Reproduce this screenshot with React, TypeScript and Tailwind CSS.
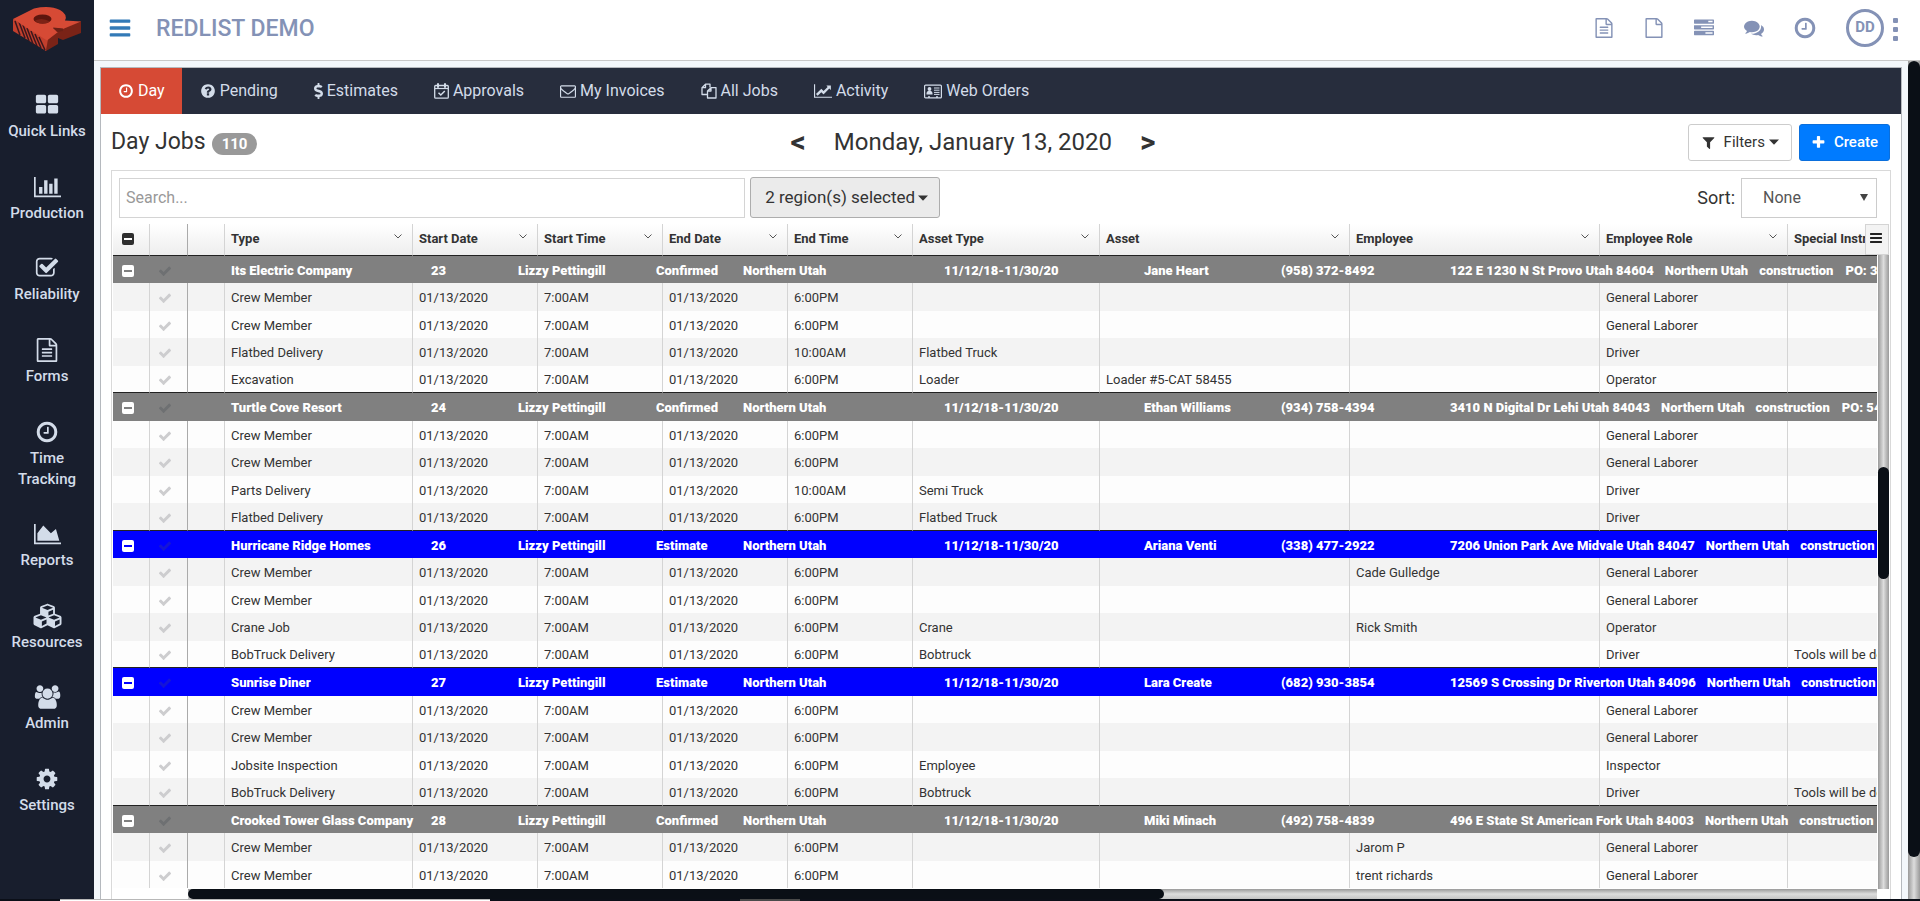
import React, { useState } from "react";
import { FaCubes, FaDollarSign } from "react-icons/fa";

const paths = {
  grid: "M832 1024v384q0 52-38 90t-90 38h-512q-52 0-90-38t-38-90v-384q0-52 38-90t90-38h512q52 0 90 38t38 90zm0-768v384q0 52-38 90t-90 38h-512q-52 0-90-38t-38-90v-384q0-52 38-90t90-38h512q52 0 90 38t38 90zm896 768v384q0 52-38 90t-90 38h-512q-52 0-90-38t-38-90v-384q0-52 38-90t90-38h512q52 0 90 38t38 90zm0-768v384q0 52-38 90t-90 38h-512q-52 0-90-38t-38-90v-384q0-52 38-90t90-38h512q52 0 90 38t38 90z",
  bars: "M640 896v512h-256v-512h256zm384-512v1024h-256v-1024h256zm1024 1152v128h-2048v-1536h128v1408h1920zm-640-896v768h-256v-768h256zm384-384v1152h-256v-1152h256z",
  area: "M2048 1536v128h-2048v-1536h128v1408h1920zm-384-1024l256 896h-1664v-576l448-576 576 576z",
  line: "M2048 1536v128h-2048v-1536h128v1408h1920zm-128-1248v435q0 21-19.5 29.5t-35.5-7.5l-121-121-633 633q-10 10-23 10t-23-10l-233-233-416 416-192-192 585-585q10-10 23-10t23 10l233 233 464-464-121-121q-16-16-7.5-35.5t29.5-19.5h435q14 0 23 9t9 23z",
  clock: "M1024 544v448q0 14-9 23t-23 9h-320q-14 0-23-9t-9-23v-64q0-14 9-23t23-9h224v-352q0-14 9-23t23-9h64q14 0 23 9t9 23zm416 352q0-148-73-273t-198-198-273-73-273 73-198 198-73 273 73 273 198 198 273 73 273-73 198-198 73-273zm224 0q0 209-103 385.5t-279.5 279.5-385.5 103-385.5-103-279.5-279.5-103-385.5 103-385.5 279.5-279.5 385.5-103 385.5 103 279.5 279.5 103 385.5z",
  fileText: "M1596 380q28 28 48 76t20 88v1152q0 40-28 68t-68 28h-1344q-40 0-68-28t-28-68v-1600q0-40 28-68t68-28h896q40 0 88 20t76 48zm-444-244v376h376q-10-29-22-41l-313-313q-12-12-41-22zm384 1528v-1024h-416q-40 0-68-28t-28-68v-416h-768v1536h1280zm-1024-864q0-14 9-23t23-9h704q14 0 23 9t9 23v64q0 14-9 23t-23 9h-704q-14 0-23-9t-9-23v-64zm736 224q14 0 23 9t9 23v64q0 14-9 23t-23 9h-704q-14 0-23-9t-9-23v-64q0-14 9-23t23-9h704zm0 256q14 0 23 9t9 23v64q0 14-9 23t-23 9h-704q-14 0-23-9t-9-23v-64q0-14 9-23t23-9h704z",
  file: "M1596 380q28 28 48 76t20 88v1152q0 40-28 68t-68 28h-1344q-40 0-68-28t-28-68v-1600q0-40 28-68t68-28h896q40 0 88 20t76 48zm-444-244v376h376q-10-29-22-41l-313-313q-12-12-41-22zm384 1528v-1024h-416q-40 0-68-28t-28-68v-416h-768v1536h1280z",
  checkSquare: "M1472 930v318q0 119-84.5 203.5t-203.5 84.5h-832q-119 0-203.5-84.5t-84.5-203.5v-832q0-119 84.5-203.5t203.5-84.5h832q63 0 117 25 15 7 18 23 3 17-9 29l-49 49q-10 10-23 10-3 0-9-2-23-6-45-6h-832q-66 0-113 47t-47 113v832q0 66 47 113t113 47h832q66 0 113-47t47-113v-254q0-13 9-22l64-64q10-10 23-10 6 0 12 3 20 8 20 29zm231-489l-814 814q-24 24-57 24t-57-24l-430-430q-24-24-24-57t24-57l110-110q24-24 57-24t57 24l263 263 647-647q24-24 57-24t57 24l110 110q24 24 24 57t-24 57z",
  cog: "M1152 896q0-106-75-181t-181-75-181 75-75 181 75 181 181 75 181-75 75-181zm512-109v222q0 12-8 23t-20 13l-185 28q-19 54-39 91 35 50 107 138 10 12 10 25t-9 23q-27 37-99 108t-94 71q-12 0-26-9l-138-108q-44 23-91 38-16 136-29 186-7 28-36 28h-222q-14 0-24.5-8.5t-11.5-21.5l-28-184q-49-16-90-37l-141 107q-10 9-25 9-14 0-25-11-126-114-165-168-7-10-7-23 0-12 8-23 15-21 51-66.5t54-70.5q-27-50-41-99l-183-27q-13-2-21-12.5t-8-23.5v-222q0-12 8-23t19-13l186-28q14-46 39-92-40-57-107-138-10-12-10-24 0-10 9-23 26-36 98.5-107.5t94.5-71.5q13 0 26 10l138 107q44-23 91-38 16-136 29-186 7-28 36-28h222q14 0 24.5 8.5t11.5 21.5l28 184q49 16 90 37l142-107q9-9 24-9 13 0 25 10 129 119 165 170 7 8 7 22 0 12-8 23-15 21-51 66.5t-54 70.5q26 50 41 98l183 28q13 2 21 12.5t8 23.5z",
  check: "M1671 566q0 40-28 68l-724 724-136 136q-28 28-68 28t-68-28l-136-136-362-362q-28-28-28-68t28-68l136-136q28-28 68-28t68 28l294 295 656-657q28-28 68-28t68 28l136 136q28 28 28 68z",
  plus: "M1600 736v192q0 40-28 68t-68 28h-416v416q0 40-28 68t-68 28h-192q-40 0-68-28t-28-68v-416h-416q-40 0-68-28t-28-68v-192q0-40 28-68t68-28h416v-416q0-40 28-68t68-28h192q40 0 68 28t28 68v416h416q40 0 68 28t28 68z",
  filter: "M1595 295q17 41-14 70l-493 493v742q0 42-39 59-13 5-25 5-27 0-45-19l-256-256q-19-19-19-45v-486l-493-493q-31-29-14-70 17-39 59-39h1280q42 0 59 39z",
  menu: "M1664 1344v128q0 26-19 45t-45 19h-1408q-26 0-45-19t-19-45v-128q0-26 19-45t45-19h1408q26 0 45 19t19 45zm0-512v128q0 26-19 45t-45 19h-1408q-26 0-45-19t-19-45v-128q0-26 19-45t45-19h1408q26 0 45 19t19 45zm0-512v128q0 26-19 45t-45 19h-1408q-26 0-45-19t-19-45v-128q0-26 19-45t45-19h1408q26 0 45 19t19 45z",
  tasks: "M1024 1408h640v-128h-640v128zm-384-512h1024v-128h-1024v128zm640-512h384v-128h-384v128zm512 832v256q0 26-19 45t-45 19h-1664q-26 0-45-19t-19-45v-256q0-26 19-45t45-19h1664q26 0 45 19t19 45zm0-512v256q0 26-19 45t-45 19h-1664q-26 0-45-19t-19-45v-256q0-26 19-45t45-19h1664q26 0 45 19t19 45zm0-512v256q0 26-19 45t-45 19h-1664q-26 0-45-19t-19-45v-256q0-26 19-45t45-19h1664q26 0 45 19t19 45z",
  comments: "M1408 768q0 139-94 257t-256.5 186.5-353.5 68.5q-86 0-176-16-124 88-278 128-36 9-86 16h-3q-11 0-20.5-8t-11.5-21q-1-3-1-6.5t.5-6.5 2-6l2.5-5 3.5-5.5 4-5 4.5-5 4-4.5q5-6 23-25t26-29.5 22.5-29 25-38.5 20.5-44q-124-72-195-177t-71-224q0-139 94-257t256.5-186.5 353.5-68.5 353.5 68.5 256.5 186.5 94 257zm384 256q0 120-71 224.5t-195 176.5q10 24 20.5 44t25 38.5 22.5 29 26 29.5 23 25q1 1 4 4.5t4.5 5 4 5 3.5 5.5l2.5 5 2 6 .5 6.5-1 6.5q-3 14-13 22t-22 7q-50-7-86-16-154-40-278-128-90 16-176 16-271 0-472-132 58 4 88 4 161 0 309-45t264-129q125-92 192-212t67-254q0-77-23-152 129 71 204 178t75 230z",
  question: "M1024 1376v-192q0-14-9-23t-23-9h-192q-14 0-23 9t-9 23v192q0 14 9 23t23 9h192q14 0 23-9t9-23zm256-672q0-88-55.5-163t-138.5-116-170-41q-243 0-371 213-15 24 8 42l132 100q7 6 19 6 16 0 25-12 53-68 86-92 34-24 86-24 48 0 85.5 26t37.5 59q0 38-20 61t-68 45q-63 28-115.5 86.5t-52.5 125.5v36q0 14 9 23t23 9h192q14 0 23-9t9-23q0-19 21.5-49.5t54.5-49.5q32-18 49-28.5t46-35 44.5-48 28-60.5 12.5-81zm384 192q0 209-103 385.5t-279.5 279.5-385.5 103-385.5-103-279.5-279.5-103-385.5 103-385.5 279.5-279.5 385.5-103 385.5 103 279.5 279.5 103 385.5z",
  envelope: "M1664 1504v-768q-32 36-69 66-268 206-426 338-51 43-83 67t-86.5 48.5-102.5 24.5h-2q-48 0-102.5-24.5t-86.5-48.5-83-67q-158-132-426-338-37-30-69-66v768q0 13 9.5 22.5t22.5 9.5h1472q13 0 22.5-9.5t9.5-22.5zm0-1051v-24.5l-.5-13-3-12.5-5.5-9-9-7.5-14-2.5h-1472q-13 0-22.5 9.5t-9.5 22.5q0 168 147 284 193 152 401 317 6 5 35 29.5t46 37.5 44.5 31.5 50.5 27.5 43 9h2q20 0 43-9t50.5-27.5 44.5-31.5 46-37.5 35-29.5q208-165 401-317 54-43 100.5-115.5t46.5-131.5zm128-37v1088q0 66-47 113t-113 47h-1472q-66 0-113-47t-47-113v-1088q0-66 47-113t113-47h1472q66 0 113 47t47 113z",
  users: "M657 896q-162 5-265 128h-134q-82 0-138-40.5t-56-118.5q0-353 124-353 6 0 43.5 21t97.5 42.5 119 21.5q67 0 133-23-5 37-5 66 0 159 93 288zm1071 637q0 120-73 189.5t-194 69.5h-874q-121 0-194-69.5t-73-189.5q0-53 3.5-103.5t14-109 26.5-108.5 43-97.5 62-81 85.5-53.5 111.5-20q10 0 43 21.5t73 48 107 48 135 21.5 135-21.5 107-48 73-48 43-21.5q61 0 111.5 20t85.5 53.5 62 81 43 97.5 26.5 108.5 14 109 3.5 103.5zm-1024-1277q0 106-75 181t-181 75-181-75-75-181 75-181 181-75 181 75 75 181zm704 384q0 159-112.5 271.5t-271.5 112.5-271.5-112.5-112.5-271.5 112.5-271.5 271.5-112.5 271.5 112.5 112.5 271.5zm576 225q0 78-56 118.5t-138 40.5h-134q-103-123-265-128 93-129 93-288 0-29-5-66 66 23 133 23 59 0 119-21.5t97.5-42.5 43.5-21q124 0 124 353zm-128-609q0 106-75 181t-181 75-181-75-75-181 75-181 181-75 181 75 75 181z",
};

type IconName = keyof typeof paths;

function Icon({ name, className, wide = false }: { name: IconName; className: string; wide?: boolean }) {
  return (
    <svg viewBox={wide ? "0 0 2048 1792" : "0 0 1792 1792"} className={className} fill="currentColor" aria-hidden="true">
      <path d={paths[name]} />
    </svg>
  );
}

function Logo() {
  return (
    <svg viewBox="0 0 94 52" className="h-[52px] w-[94px]" aria-label="Redlist">
      <path fill="#7a2317" d="M47 38 56 31 81 21V33L63 40 58 38V44L46 51Z" />
      <path fill="#c23f2d" d="M13 19V31L46 51 48 39Z" />
      <path d="M15 21 20 35M19 22 25 38M23 25 29 41M27 28 33 44M31 31 37 46M35 34 41 48M39 37 45 50" stroke="#3a171c" strokeWidth="1.500" />
      <path fill="#d64a35" d="M13 19 34 8.500Q50 5 60 10 68 14.500 65 20.500L81 21.500 63 29 53 28 58 32 47 40.500Z" />
      <path fill="#6b2016" d="M53 27.500 63 28.500V31L57 32Z" />
      <ellipse cx="42.500" cy="19" rx="9" ry="4.500" fill="#5d160e" />
      <path d="M35 20.500Q42 17 50 21.500 44 25.500 37 22.500Z" fill="#7d2216" />
    </svg>
  );
}

function CalendarCheck() {
  return (
    <svg viewBox="0 0 15 16" className="h-4 w-[15px]" fill="none" stroke="currentColor" aria-hidden="true">
      <rect x="0.700" y="2.500" width="13.600" height="12.700" rx="1" strokeWidth="1.300" />
      <path d="M1 5.500H14" strokeWidth="1.200" />
      <path d="M4 1V4M11 1V4" strokeWidth="2" strokeLinecap="round" />
      <path d="M4.500 9.800 6.800 12 10.800 8" strokeWidth="1.500" />
    </svg>
  );
}

function Files() {
  return (
    <svg viewBox="0 0 16 16" className="h-4 w-4" fill="none" stroke="currentColor" strokeWidth="1.300" strokeLinejoin="round" aria-hidden="true">
      <path d="M6 11.500H1V4.700L4.500 1.200H9V4.500M4.500 1.200V4.700H1" />
      <path d="M10 4.600H15V15H6.500V8L10 4.600V8H6.500" />
    </svg>
  );
}

function AddressCard() {
  return (
    <svg viewBox="0 0 18 15" className="h-[15px] w-[18px]" aria-hidden="true">
      <rect x="0.600" y="1.100" width="16.800" height="12.800" rx="1" fill="none" stroke="currentColor" strokeWidth="1.200" />
      <circle cx="5.500" cy="5" r="1.900" fill="currentColor" />
      <path d="M2.500 10.500V9Q3 7 4.200 7H6.800Q8 7 8.500 9V10.500Z" fill="currentColor" />
      <path d="M10 4H15.500M10 6.200H15.500M10 8.400H15.500M10 10.400H15.500" stroke="currentColor" />
      <path d="M4 13H6M12 13H14" stroke="currentColor" strokeWidth="1.500" />
    </svg>
  );
}

const Caret = () => (
  <svg viewBox="0 0 10 6" className="h-[6px] w-[10px]" fill="currentColor" aria-hidden="true">
    <path d="M0 0.500H10L5 5.800Z" />
  </svg>
);

const sideItems = [
  { label: "Quick Links", icon: <Icon name="grid" className="h-6 w-6" /> },
  { label: "Production", icon: <Icon name="bars" wide className="h-[24px] w-[27px]" /> },
  { label: "Reliability", icon: <Icon name="checkSquare" className="h-6 w-6" /> },
  { label: "Forms", icon: <Icon name="fileText" className="h-6 w-6" /> },
  { label: "Time Tracking", icon: <Icon name="clock" className="h-6 w-6" /> },
  { label: "Reports", icon: <Icon name="area" wide className="h-[24px] w-[27px]" /> },
  { label: "Resources", icon: <FaCubes className="h-7 w-[29px]" /> },
  { label: "Admin", icon: <Icon name="users" wide className="h-6 w-[27px]" /> },
  { label: "Settings", icon: <Icon name="cog" className="h-6 w-6" /> },
];

const tabs = [
  { label: "Day", icon: <Icon name="clock" className="h-4 w-4" /> },
  { label: "Pending", icon: <Icon name="question" className="h-4 w-4" /> },
  { label: "Estimates", icon: <FaDollarSign className="h-4 w-[9px]" /> },
  { label: "Approvals", icon: <CalendarCheck /> },
  { label: "My Invoices", icon: <Icon name="envelope" className="h-4 w-4" /> },
  { label: "All Jobs", icon: <Files /> },
  { label: "Activity", icon: <Icon name="line" wide className="h-4 w-[18px]" /> },
  { label: "Web Orders", icon: <AddressCard /> },
];

const columns = ["Type", "Start Date", "Start Time", "End Date", "End Time", "Asset Type", "Asset", "Employee", "Employee Role", "Special Instructions"];

type Task = { type: string; end?: string; assetType?: string; asset?: string; employee?: string; role: string; note?: string };

type Job = { name: string; id: number; status: "Confirmed" | "Estimate"; contact: string; phone: string; address: string; extra?: string; tasks: Task[] };

const crew: Task = { type: "Crew Member", role: "General Laborer" };

const jobs: Job[] = [
  {
    name: "Its Electric Company", id: 23, status: "Confirmed", contact: "Jane Heart", phone: "(958) 372-8492",
    address: "122 E 1230 N St Provo Utah 84604", extra: "PO: 325",
    tasks: [
      crew,
      crew,
      { type: "Flatbed Delivery", end: "10:00AM", assetType: "Flatbed Truck", role: "Driver" },
      { type: "Excavation", assetType: "Loader", asset: "Loader #5-CAT 58455", role: "Operator" },
    ],
  },
  {
    name: "Turtle Cove Resort", id: 24, status: "Confirmed", contact: "Ethan Williams", phone: "(934) 758-4394",
    address: "3410 N Digital Dr Lehi Utah 84043", extra: "PO: 541",
    tasks: [
      crew,
      crew,
      { type: "Parts Delivery", end: "10:00AM", assetType: "Semi Truck", role: "Driver" },
      { type: "Flatbed Delivery", assetType: "Flatbed Truck", role: "Driver" },
    ],
  },
  {
    name: "Hurricane Ridge Homes", id: 26, status: "Estimate", contact: "Ariana Venti", phone: "(338) 477-2922",
    address: "7206 Union Park Ave Midvale Utah 84047",
    tasks: [
      { ...crew, employee: "Cade Gulledge" },
      crew,
      { type: "Crane Job", assetType: "Crane", employee: "Rick Smith", role: "Operator" },
      { type: "BobTruck Delivery", assetType: "Bobtruck", role: "Driver", note: "Tools will be delivered" },
    ],
  },
  {
    name: "Sunrise Diner", id: 27, status: "Estimate", contact: "Lara Create", phone: "(682) 930-3854",
    address: "12569 S Crossing Dr Riverton Utah 84096",
    tasks: [
      crew,
      crew,
      { type: "Jobsite Inspection", assetType: "Employee", role: "Inspector" },
      { type: "BobTruck Delivery", assetType: "Bobtruck", role: "Driver", note: "Tools will be delivered" },
    ],
  },
  {
    name: "Crooked Tower Glass Company", id: 28, status: "Confirmed", contact: "Miki Minach", phone: "(492) 758-4839",
    address: "496 E State St American Fork Utah 84003",
    tasks: [
      { ...crew, employee: "Jarom P" },
      { ...crew, employee: "trent richards" },
    ],
  },
];

function Sidebar() {
  return (
    <aside className="flex w-[94px] shrink-0 flex-col items-center bg-[#181e2d] text-[#d3dce9]">
      <a href="#home" className="block">
        <Logo />
      </a>
      <nav className="mt-[39px] mb-[83px] flex w-full flex-1 flex-col justify-between">
        {sideItems.map((item) => (
          <a key={item.label} href="#" className="flex flex-col items-center px-1 text-center text-[15px] leading-[21px] font-medium">
            <span className="mb-[2px] flex h-7 items-center">{item.icon}</span>
            {item.label}
          </a>
        ))}
      </nav>
    </aside>
  );
}

function Header() {
  return (
    <header className="flex h-[61px] shrink-0 items-center border-b border-[#c8c8c8] bg-white pb-[5px] pl-[14px] text-[#8492b6]">
      <button type="button" aria-label="Toggle menu" className="text-[#337ab7]">
        <Icon name="menu" className="h-6 w-6" />
      </button>
      <h1 className="ml-6 pt-[3px] text-[23px] font-medium">REDLIST DEMO</h1>
      <div className="mr-[22px] ml-auto flex items-center">
        <button type="button" aria-label="Reports" className="mr-[30px]"><Icon name="fileText" className="h-5 w-5" /></button>
        <button type="button" aria-label="Documents" className="mr-[30px]"><Icon name="file" className="h-5 w-5" /></button>
        <button type="button" aria-label="Tasks" className="mr-[30px]"><Icon name="tasks" className="h-5 w-5" /></button>
        <button type="button" aria-label="Messages" className="mr-[29px]"><Icon name="comments" className="h-5 w-5" /></button>
        <button type="button" aria-label="Time clock" className="mr-[29px]"><Icon name="clock" className="h-6 w-6" /></button>
        <button type="button" className="h-[38px] w-[38px] rounded-full border-[3px] border-[#8492b6] text-[15px] leading-none font-bold">DD</button>
        <button type="button" aria-label="More" className="mt-1 ml-[9px] flex flex-col gap-1">
          <span className="h-[5px] w-[5px] rounded-[1px] bg-[#8492b6]" />
          <span className="h-[5px] w-[5px] rounded-[1px] bg-[#8492b6]" />
          <span className="h-[5px] w-[5px] rounded-[1px] bg-[#8492b6]" />
        </button>
      </div>
    </header>
  );
}

function MinusBox({ dark = false }: { dark?: boolean }) {
  return (
    <button type="button" aria-label="Collapse" className={`flex h-3 w-3 items-center justify-center rounded-[2px] ${dark ? "bg-[#2f2f2f]" : "bg-white"}`}>
      <span className={`h-[2px] w-2 ${dark ? "bg-white" : "bg-current"}`} />
    </button>
  );
}

function JobRows({ job, start }: { job: Job; start: number }) {
  const blue = job.status === "Estimate";
  const rowHeight = (n: number) => (n % 2 ? "h-[28px]" : "h-[27px]");
  return (
    <>
      <tr className={`${rowHeight(start)} ${blue ? "bg-[#0000ff] text-[#0000ff]" : "bg-[#808080] text-[#808080]"}`}>
        <td className="pt-[2px] pl-[9px]"><MinusBox /></td>
        <td className="pt-[2px] pl-2"><Icon name="check" className={`h-[14px] w-[14px] ${blue ? "text-[#1414d8]" : "text-[#6e7072]"}`} /></td>
        <td />
        <td colSpan={10} className="overflow-hidden px-[6px] pt-[2px] font-black whitespace-nowrap text-white">
          <div className="flex">
            <span className="w-[200px] shrink-0">{job.name}</span>
            <span className="w-[87px] shrink-0">{job.id}</span>
            <span className="w-[138px] shrink-0">Lizzy Pettingill</span>
            <span className="w-[87px] shrink-0">{job.status}</span>
            <span className="w-[201px] shrink-0">Northern Utah</span>
            <span className="w-[200px] shrink-0">11/12/18-11/30/20</span>
            <span className="w-[137px] shrink-0">{job.contact}</span>
            <span className="w-[169px] shrink-0">{job.phone}</span>
            <span className="mr-[11px] shrink-0">{job.address}</span>
            <span className="mr-[11px] shrink-0">Northern Utah</span>
            <span className="mr-3 shrink-0">construction</span>
            {job.extra && <span>{job.extra}</span>}
          </div>
        </td>
      </tr>
      {job.tasks.map((task, i) => {
        const n = start + i + 1;
        const last = i === 3;
        const line = last ? "border-b border-b-[#222]" : "";
        const cells = [task.type, "01/13/2020", "7:00AM", "01/13/2020", task.end ?? "6:00PM", task.assetType, task.asset, task.employee, task.role, task.note];
        return (
          <tr key={n} className={`${rowHeight(n)} ${n % 2 ? "bg-[#f3f3f3]" : "bg-[#fdfdfd]"}`}>
            <td className={`border-r border-r-[#d4d4d4] ${line}`} />
            <td className={`border-r border-r-[#aaaaaa] pt-[2px] pl-2 ${line}`}><Icon name="check" className="h-[14px] w-[14px] text-[#cdcdcf]" /></td>
            <td className={`border-r border-r-[#d4d4d4] ${line}`} />
            {cells.map((text, c) => (
              <td key={columns[c]} className={`overflow-hidden px-[6px] pt-[2px] whitespace-nowrap ${c < 9 ? "border-r border-r-[#d4d4d4]" : ""} ${line}`}>
                {text}
              </td>
            ))}
          </tr>
        );
      })}
    </>
  );
}

function JobsGrid() {
  return (
    <div className="relative flex min-h-0 flex-1 flex-col">
      <div className="flex min-h-0 flex-1">
        <div className="min-w-0 flex-1 overflow-hidden">
          <table className="w-full table-fixed border-separate border-spacing-0 text-left text-[13px] leading-5">
            <colgroup>
              <col className="w-[37px]" />
              <col className="w-[38px]" />
              <col className="w-[37px]" />
              <col className="w-[188px]" />
              <col className="w-[125px]" />
              <col className="w-[125px]" />
              <col className="w-[125px]" />
              <col className="w-[125px]" />
              <col className="w-[187px]" />
              <col className="w-[250px]" />
              <col className="w-[250px]" />
              <col className="w-[188px]" />
              <col />
            </colgroup>
            <thead>
              <tr className="h-8 bg-linear-to-b from-white to-[#ededed]">
                <th className="border-r border-b border-r-[#d4d4d4] border-b-[#222] pb-[2px] pl-[9px]"><MinusBox dark /></th>
                <th className="border-r border-b border-r-[#aaaaaa] border-b-[#222]" />
                <th className="border-r border-b border-r-[#d4d4d4] border-b-[#222]" />
                {columns.map((name, i) => (
                  <th key={name} className={`overflow-hidden border-b border-b-[#222] px-[6px] pb-[2px] font-bold whitespace-nowrap text-[#333] ${i < 9 ? "border-r border-r-[#d4d4d4]" : ""}`}>
                    <span className="flex items-center justify-between">
                      {name}
                      {i < 9 && (
                        <svg viewBox="0 0 8 5" className="mr-1 mb-1 h-[5px] w-2" fill="none" stroke="#555" aria-hidden="true">
                          <path d="M0.500 0.500 4 4 7.500 0.500" />
                        </svg>
                      )}
                    </span>
                  </th>
                ))}
              </tr>
            </thead>
            <tbody>
              {jobs.map((job, i) => (
                <JobRows key={job.id} job={job} start={i * 5} />
              ))}
            </tbody>
          </table>
        </div>
        <div className="flex w-3 shrink-0 flex-col pt-[31px] pl-px">
          <div className="flex flex-1 flex-col bg-linear-to-r from-[#9a9a9a] via-[#dddddd] to-[#9a9a9a] pt-[212px]">
            <div className="h-[112px] rounded-full bg-[#0a0f16]" />
          </div>
        </div>
      </div>
      <div className="mr-3 ml-[75px] h-[10px] shrink-0 bg-linear-to-b from-[#9a9a9a] via-[#dddddd] to-[#c4c4c4]">
        <div className="h-full w-[57.8%] rounded-l-md rounded-r-md bg-[#0a0f16]" />
      </div>
      <button type="button" aria-label="Grid menu" className="absolute top-0 right-0 flex h-[31px] w-6 items-center justify-center border border-[#d4d4d4] bg-[#f3f3f3] pr-[3px] pb-1 text-[#222]">
        <Icon name="menu" className="h-[14px] w-[14px]" />
      </button>
    </div>
  );
}

export default function App() {
  const [activeTab, setActiveTab] = useState("Day");

  return (
    <div className="flex h-screen flex-col overflow-hidden bg-[#f3f7fb] font-[Roboto,sans-serif] text-[#333]">
      <div className="flex min-h-0 flex-1">
        <Sidebar />
        <div className="flex min-w-0 flex-1 flex-col">
          <Header />
          <div className="flex min-h-0 flex-1">
            <main className="mt-[6px] mr-[6px] ml-[6px] flex min-w-0 flex-1 flex-col border border-b-0 border-[#b5b9be] bg-white">
              {/* Tabs */}
              <nav className="flex h-[46px] shrink-0 bg-[#272d3d]">
                {tabs.map((tab) => (
                  <button
                    key={tab.label}
                    type="button"
                    onClick={() => setActiveTab(tab.label)}
                    className={`flex items-center gap-1 text-base ${activeTab === tab.label ? "bg-[#d64a35] px-[17px] text-white" : "px-[18px] text-[#d3dce9]"}`}
                  >
                    {tab.icon}
                    {tab.label}
                  </button>
                ))}
              </nav>

              {/* Title and date */}
              <div className="flex h-14 shrink-0 items-center pr-[11px] pl-[10px]">
                <div className="flex w-[38.2%] items-center gap-[6px]">
                  <h2 className="text-[23px]">Day Jobs</h2>
                  <span className="mt-1 rounded-full bg-[#999] px-[10px] text-[15px] leading-[22px] font-bold text-white">110</span>
                </div>
                <div className="flex items-center gap-7 text-2xl">
                  <button type="button" aria-label="Previous day" className="text-[30px] font-bold">&lt;</button>
                  <span>Monday, January 13, 2020</span>
                  <button type="button" aria-label="Next day" className="text-[30px] font-bold">&gt;</button>
                </div>
                <div className="ml-auto flex gap-[7px]">
                  <button type="button" className="flex h-[37px] items-center rounded-[3px] border border-[#ccc] px-3 text-[15px]">
                    <Icon name="filter" className="mr-2 h-[15px] w-[15px]" />
                    <span className="mr-1">Filters</span>
                    <Caret />
                  </button>
                  <button type="button" className="flex h-[37px] items-center rounded-[3px] border border-[#0b6fdc] bg-[#007bff] px-[11px] text-[15px] font-medium text-white">
                    <Icon name="plus" className="mr-2 h-[15px] w-[15px]" />
                    Create
                  </button>
                </div>
              </div>

              <section className="mr-[10px] ml-[10px] flex min-h-0 flex-1 flex-col border border-b-0 border-[#d9d9d9] px-px">
                {/* Search, regions and sort */}
                <div className="flex shrink-0 items-center px-[6px] py-[6px]">
                  <input aria-label="Search" placeholder="Search..." className="mr-[5px] h-10 w-[35.5%] border border-[#d4d4d4] px-[6px] text-base placeholder:text-[#999] focus:outline-none" />
                  <button type="button" className="flex h-[41px] items-center gap-[3px] rounded-[3px] border border-[#adadad] bg-[#ebebeb] pr-[11px] pl-[14px] text-[17px]">
                    2 region(s) selected
                    <Caret />
                  </button>
                  <label htmlFor="sort" className="mr-[6px] ml-auto text-lg">Sort:</label>
                  <span className="relative mr-[6px]">
                    <select id="sort" className="block h-10 w-[136px] appearance-none border border-[#ccc] bg-white pl-[21px] text-base text-[#555]">
                      <option>None</option>
                    </select>
                    <svg viewBox="0 0 8 7" className="pointer-events-none absolute top-4 right-[9px] h-[7px] w-2" fill="#444" aria-hidden="true">
                      <path d="M0 0H8L4 7Z" />
                    </svg>
                  </span>
                </div>
                <JobsGrid />
              </section>
            </main>
            <div className="w-3 shrink-0 bg-linear-to-r from-[#9a9a9a] via-[#dddddd] to-[#9a9a9a]">
              <div className="h-[95%] rounded-full bg-[#0a0f16]" />
            </div>
          </div>
        </div>
      </div>
      {/* Bottom edge */}
      <div className="flex h-[2px] shrink-0 bg-[#0b0f18]">
        <div className="ml-[60px] w-[430px] border-t border-[#b8b8b8] bg-white" />
        <div className="ml-[250px] w-[60px] bg-[#4a4a4a]" />
      </div>
    </div>
  );
}
